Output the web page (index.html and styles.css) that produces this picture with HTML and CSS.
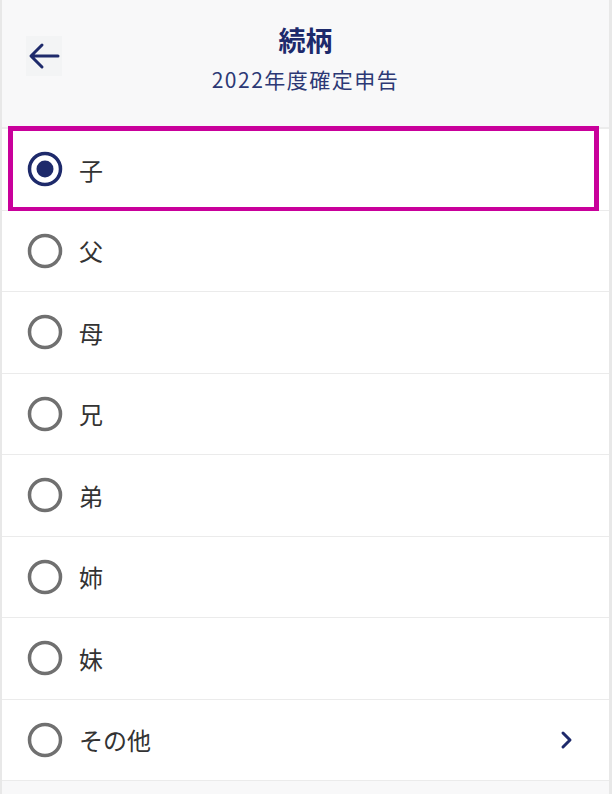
FILE: index.html
```html
<!DOCTYPE html>
<html lang="ja">
  <head>
    <meta charset="utf-8">
    <title>続柄</title>
    <link rel="stylesheet" href="styles.css">
  </head>
  <body>
    <div class="screen">
      <div class="header">
        <a href="#" class="back">
          <svg width="34" height="28" viewBox="0 0 34 28"><path d="M31 14H5M15 3L4 14l11 11" fill="none" stroke="#1e2a6b" stroke-width="3" stroke-linecap="round" stroke-linejoin="round"/></svg>
        </a>
        <div class="titles">
          <div class="title">続柄</div>
          <div class="subtitle">2022年度確定申告</div>
        </div>
        <div></div>
      </div>

      <ul class="list">
        <li class="row selected">
          <svg class="radio" width="36" height="36" viewBox="0 0 36 36"><circle cx="18" cy="18" r="15.5" fill="none" stroke="#1e2a6b" stroke-width="3.5"/><circle cx="18" cy="18" r="8.5" fill="#1e2a6b"/></svg>
          <span class="label">子</span>
          <div class="highlight"></div>
        </li>
        <li class="row">
          <svg class="radio" width="36" height="36" viewBox="0 0 36 36"><circle cx="18" cy="18" r="15.5" fill="none" stroke="#707070" stroke-width="3.5"/></svg>
          <span class="label">父</span>
        </li>
        <li class="row">
          <svg class="radio" width="36" height="36" viewBox="0 0 36 36"><circle cx="18" cy="18" r="15.5" fill="none" stroke="#707070" stroke-width="3.5"/></svg>
          <span class="label">母</span>
        </li>
        <li class="row">
          <svg class="radio" width="36" height="36" viewBox="0 0 36 36"><circle cx="18" cy="18" r="15.5" fill="none" stroke="#707070" stroke-width="3.5"/></svg>
          <span class="label">兄</span>
        </li>
        <li class="row">
          <svg class="radio" width="36" height="36" viewBox="0 0 36 36"><circle cx="18" cy="18" r="15.5" fill="none" stroke="#707070" stroke-width="3.5"/></svg>
          <span class="label">弟</span>
        </li>
        <li class="row">
          <svg class="radio" width="36" height="36" viewBox="0 0 36 36"><circle cx="18" cy="18" r="15.5" fill="none" stroke="#707070" stroke-width="3.5"/></svg>
          <span class="label">姉</span>
        </li>
        <li class="row">
          <svg class="radio" width="36" height="36" viewBox="0 0 36 36"><circle cx="18" cy="18" r="15.5" fill="none" stroke="#707070" stroke-width="3.5"/></svg>
          <span class="label">妹</span>
        </li>
        <li class="row">
          <svg class="radio" width="36" height="36" viewBox="0 0 36 36"><circle cx="18" cy="18" r="15.5" fill="none" stroke="#707070" stroke-width="3.5"/></svg>
          <span class="label">その他</span>
          <svg class="chevron" width="14" height="20" viewBox="0 0 14 20"><path d="M4 3l7 7-7 7" fill="none" stroke="#1e2a6b" stroke-width="3" stroke-linecap="round" stroke-linejoin="round"/></svg>
        </li>
      </ul>
    </div>
  </body>
</html>
```

FILE: styles.css
```css
body, ul, li {margin:0;padding:0}

body {
  background-color: #f7f7f8;
  font-family: "Noto Sans CJK JP", "Noto Sans", sans-serif;
}

.screen {
  min-height: 794px;
  box-sizing: border-box;
  border-left: 2px solid #e8e8e8;
  border-right: 3px solid #e8e8e8;
  background-color: #f8f8f9;
}

.header {
  display: grid;
  grid-template-columns: 90px 1fr 90px;
  height: 129px;
  box-sizing: border-box;
  padding: 24px 0 0 24px;
  border-bottom: 2px solid #ececec;
}

.back {
  display: flex;
  align-items: center;
  justify-content: center;
  width: 36px;
  height: 40px;
  margin-top: 12px;
  background-color: #f3f4f5;
}

.titles {
  text-align: center;
  color: #1d2a6c;
  padding-right: 24px;
}

.title {
  font-size: 27px;
  font-weight: bold;
  line-height: 32px;
}

.subtitle {
  margin-top: 7px;
  font-size: 21px;
  line-height: 32px;
  letter-spacing: 1.5px;
  color: #2c3875;
}

.list {
  list-style: none;
}

.row {
  position: relative;
  display: flex;
  align-items: center;
  gap: 16px;
  height: 81.5px;
  box-sizing: border-box;
  padding-left: 25px;
  padding-right: 36px;
  background-color: #fff;
  border-bottom: 1.5px solid #ebebeb;
}

.label {
  flex: 1;
  font-size: 24px;
  color: #333;
}

.highlight {
  position: absolute;
  left: 6px;
  top: -3px;
  width: 591px;
  height: 86px;
  box-sizing: border-box;
  border: 5px solid #c9009b;
}
```
